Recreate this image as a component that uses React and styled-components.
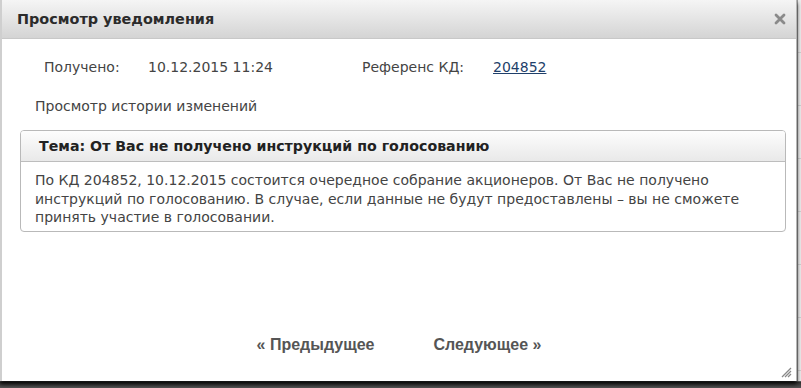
import React from "react";
import styled, { createGlobalStyle } from "styled-components";

const GlobalStyle = createGlobalStyle`
  html, body {
    margin: 0;
    padding: 0;
    background: #d9d9d9;
    width: 801px;
    height: 388px;
    overflow: hidden;
  }
  #root {
    width: 801px;
    height: 388px;
  }
`;

function App() {
  return (
    <>
      <GlobalStyle />
      <Page>
        <Dialog>
          <TitleBar>
            <Title>Просмотр уведомления</Title>
            <Close viewBox="0 0 12 12">
              <path d="M2 2 L10 10 M10 2 L2 10" stroke="#8a8a8a" strokeWidth="2.8" strokeLinecap="round" />
            </Close>
          </TitleBar>
          <Content>
            <InfoRow>
              <Cell $w={104}>Получено:</Cell>
              <Cell $w={214}>10.12.2015 11:24</Cell>
              <Cell $w={131}>Референс КД:</Cell>
              <RefLink href="#">204852</RefLink>
            </InfoRow>
            <HistoryLink>Просмотр истории изменений</HistoryLink>
            <MessageBox>
              <MessageHeader>Тема: От Вас не получено инструкций по голосованию</MessageHeader>
              <MessageBody>
                По КД 204852, 10.12.2015 состоится очередное собрание акционеров. От Вас не получено
                инструкций по голосованию. В случае, если данные не будут предоставлены – вы не сможете
                принять участие в голосовании.
              </MessageBody>
            </MessageBox>
          </Content>
          <Footer>
            <NavButton>« Предыдущее</NavButton>
            <NavButton>Следующее »</NavButton>
          </Footer>
          <Grip viewBox="0 0 12 12">
            <path d="M11 2 L2 11 M11 5 L5 11 M11 8 L8 11" stroke="#888" strokeWidth="1.3" />
          </Grip>
        </Dialog>
        <Backdrop />
      </Page>
    </>
  );
}

export default App;

const Page = styled.div`
  display: flex;
  width: 801px;
  height: 388px;
  background: linear-gradient(to bottom, #d9d9d9 0, #d9d9d9 380px, #2e2e2e 382px, #555 388px);
`;

const Backdrop = styled.div`
  flex: 1;
  height: 381px;
  border-left: 1px solid #9a9a9a;
  background: repeating-linear-gradient(to bottom, #ececec 0, #ececec 52px, #b5b5b5 53px);
`;

const Dialog = styled.div`
  position: relative;
  display: flex;
  flex-direction: column;
  width: 797px;
  height: 381px;
  box-sizing: border-box;
  background: #fff;
  border-left: 2px solid #cfcfcf;
  border-right: 1px solid #b5b5b5;
  box-shadow: 0 3px 4px rgba(0, 0, 0, 0.85);
  font-family: "DejaVu Sans", Verdana, sans-serif;
`;

const TitleBar = styled.div`
  display: flex;
  align-items: center;
  justify-content: space-between;
  height: 38px;
  padding: 0 10px 0 15px;
  background: linear-gradient(to bottom, #f5f5f5, #d4d4d4);
  border-bottom: 1px solid #c8c8c8;
`;

const Title = styled.span`
  font-weight: bold;
  font-size: 14.4px;
  color: #2b2b2b;
`;

const Close = styled.svg`
  width: 12px;
  height: 12px;
`;

const Content = styled.div`
  display: flex;
  flex-direction: column;
  padding: 0 10px 0 18px;
`;

const InfoRow = styled.div`
  display: flex;
  align-items: center;
  height: 20px;
  margin-top: 18px;
  padding-left: 24px;
  font-size: 14px;
  color: #444;
`;

const Cell = styled.span`
  width: ${(p) => p.$w}px;
`;

const RefLink = styled.a`
  color: #1f3f6a;
  text-decoration: underline;
`;

const HistoryLink = styled.div`
  margin-top: 21px;
  padding-left: 15px;
  font-size: 14px;
  line-height: 16px;
  color: #444;
`;

const MessageBox = styled.div`
  margin-top: 16px;
  width: 764px;
  border: 1px solid #b9b9b9;
  border-radius: 4px;
  overflow: hidden;
`;

const MessageHeader = styled.div`
  height: 30px;
  display: flex;
  align-items: center;
  padding-left: 18px;
  background: linear-gradient(to bottom, #fdfdfd, #e9e9e9);
  border-bottom: 1px solid #bdbdbd;
  font-weight: bold;
  font-size: 14.2px;
  color: #222;
`;

const MessageBody = styled.div`
  padding: 9px 12px 4px 14px;
  font-size: 14px;
  line-height: 18.5px;
  color: #444;
`;

const Footer = styled.div`
  display: flex;
  justify-content: center;
  gap: 59px;
  margin-top: auto;
  margin-bottom: 27px;
`;

const NavButton = styled.span`
  font-family: "Liberation Sans", Arial, sans-serif;
  font-weight: bold;
  font-size: 16px;
  line-height: 18px;
  color: #555;
`;

const Grip = styled.svg`
  position: absolute;
  right: 4px;
  bottom: 3px;
  width: 12px;
  height: 12px;
`;
